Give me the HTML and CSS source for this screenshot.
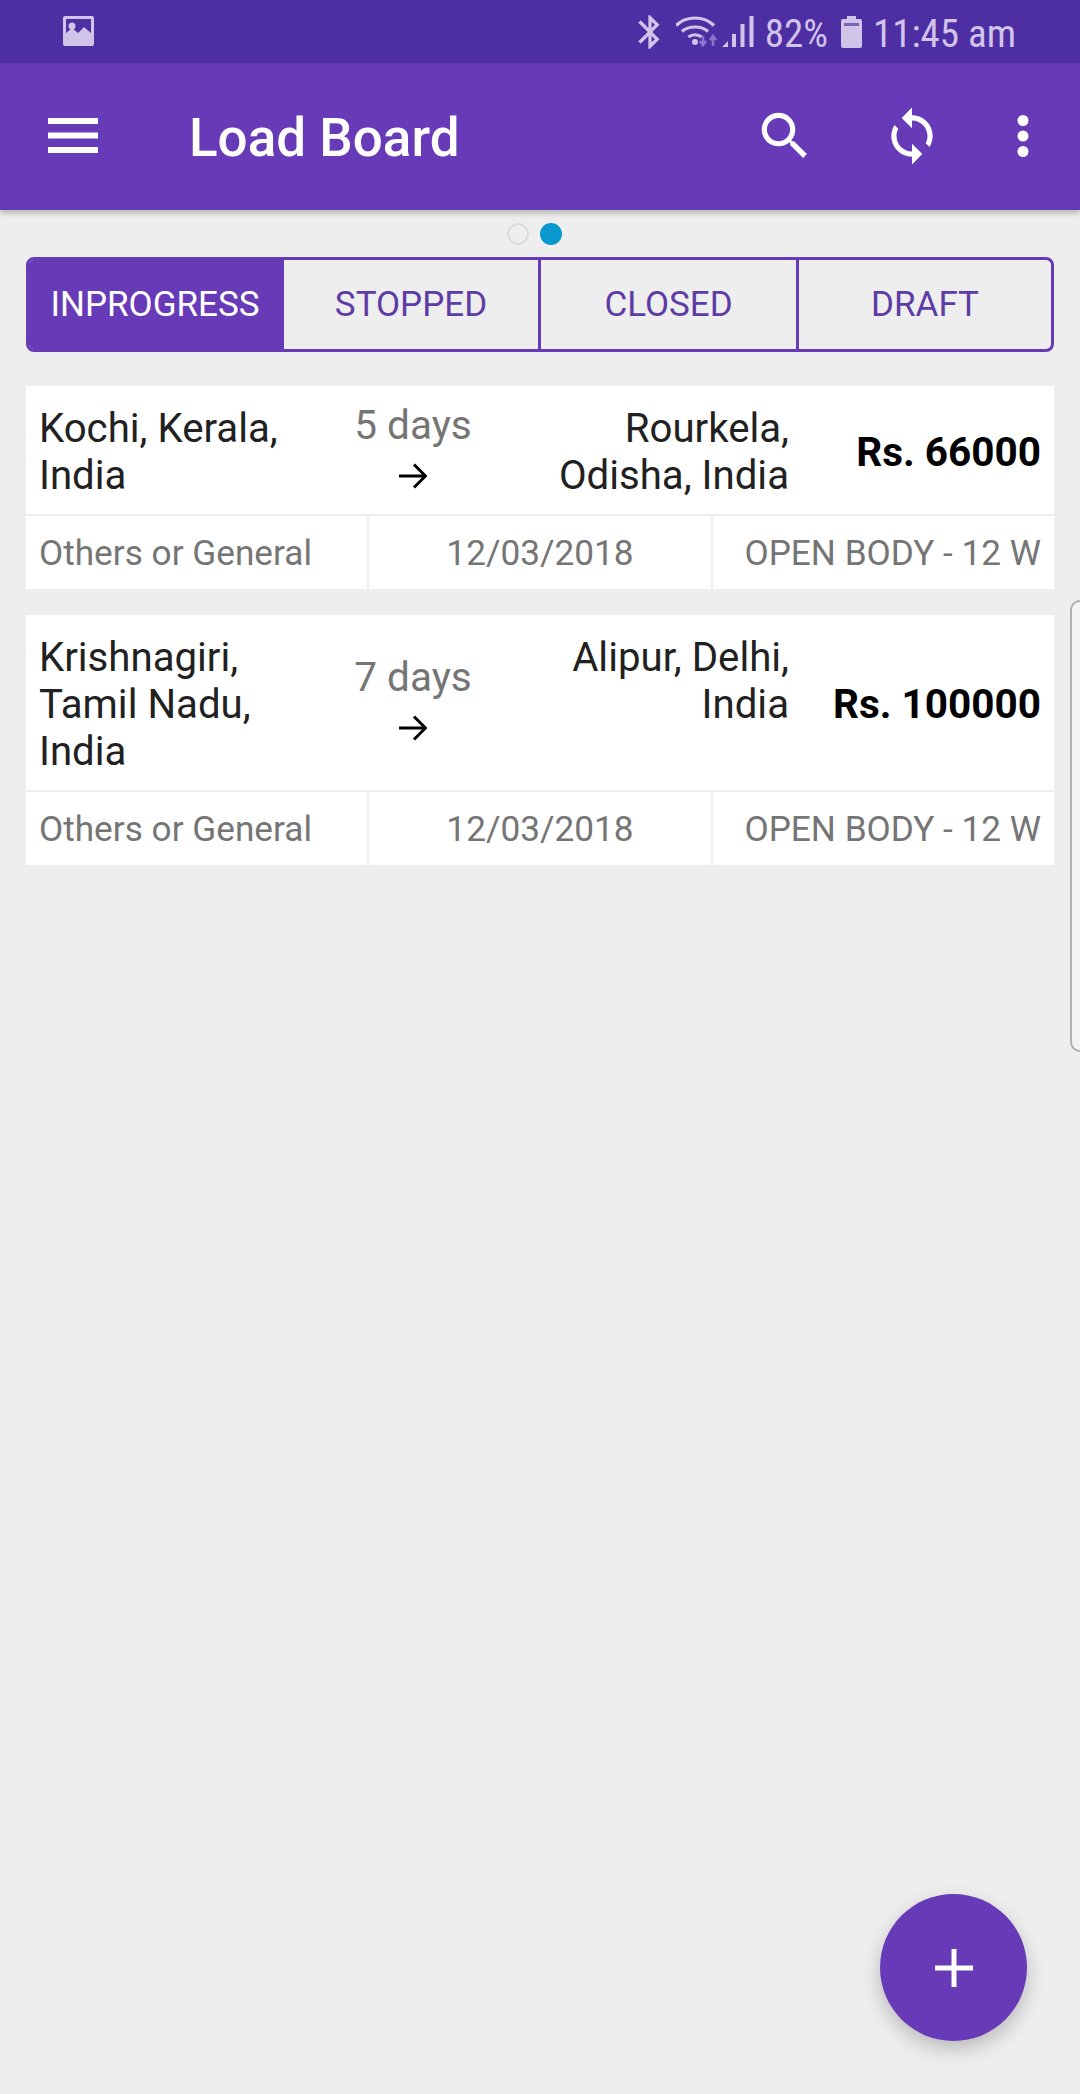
FILE: index.html
```html
<!DOCTYPE html>
<html lang="en">
<head>
    <meta charset="UTF-8">
    <meta name="viewport" content="width=device-width, initial-scale=1.0">
    <title>Load Board</title>
    <link rel="stylesheet" href="styles.css">
</head>
<body>
    <div class="status-bar">
        <svg class="status-image" viewBox="0 0 31 30">
            <path fill-rule="evenodd" fill="#d1c4e9" d="M2 0h27a2 2 0 0 1 2 2v26a2 2 0 0 1-2 2H2a2 2 0 0 1-2-2V2a2 2 0 0 1 2-2zM3 3v14l6-5 6 5 6-6 7 6V3z"/>
            <circle cx="9" cy="10" r="3.5" fill="#d1c4e9"/>
        </svg>
        <div class="status-right">
            <svg class="status-bt" viewBox="0 0 24 24"><path fill="#d1c4e9" d="M17.71 7.71L12 2h-1v7.59L6.41 5 5 6.41 10.59 12 5 17.59 6.41 19 11 14.41V22h1l5.71-5.71-4.3-4.29 4.3-4.29zM13 5.83l1.88 1.88L13 9.59V5.83zm1.88 10.46L13 18.17v-3.76l1.88 1.88z"/></svg>
            <svg class="status-wifi" viewBox="0 0 44 32">
                <g fill="none" stroke="#d1c4e9" stroke-width="3.2">
                    <path d="M0 9.5C10-.5 28-.5 38 9.5"/>
                    <path d="M6 15.500c6.500-6 19.500-6 26 0"/>
                    <path d="M12.500 21c3.500-3 9.500-3 13 0"/>
                </g>
                <circle cx="19" cy="26" r="3" fill="#d1c4e9"/>
                <path d="M27 20v9M24 25l3 4 3-4" fill="none" stroke="#8c74c8" stroke-width="2.600"/>
                <path d="M37 30v-10M34 24l3-4 3 4" fill="none" stroke="#8c74c8" stroke-width="2.600"/>
            </svg>
            <svg class="status-signal" viewBox="0 0 32 32">
                <path fill="#d1c4e9" d="M0 31l6-6v6zM10 18h4v13h-4zM18.500 8h4v23h-4zM27.500 0h4v31h-4z"/>
            </svg>
            <span class="status-text">82%</span>
            <svg class="status-battery" viewBox="0 0 21 32">
                <path fill="#d1c4e9" d="M6 0h9v3h4a2 2 0 0 1 2 2v25a2 2 0 0 1-2 2H2a2 2 0 0 1-2-2V5a2 2 0 0 1 2-2h4z"/>
                <rect x="3" y="7" width="15" height="3" fill="#7e63bd"/>
            </svg>
            <span class="status-text">11:45 am</span>
        </div>
    </div>

    <header class="app-bar">
        <svg class="menu-icon" viewBox="0 0 50 35"><path fill="#fff" d="M0 0h50v6H0zM0 14.500h50v6H0zM0 29h50v6H0z"/></svg>
        <h1 class="app-title">Load Board</h1>
        <svg class="bar-icon search-icon" viewBox="0 0 24 24"><path fill="#fff" d="M15.500 14h-.79l-.28-.27C15.410 12.590 16 11.110 16 9.500 16 5.910 13.090 3 9.500 3S3 5.910 3 9.500 5.910 16 9.500 16c1.610 0 3.090-.59 4.230-1.570l.27.28v.79l5 4.990L20.490 19l-4.990-5zm-6 0C7.010 14 5 11.990 5 9.500S7.010 5 9.500 5 14 7.010 14 9.500 11.990 14 9.500 14z"/></svg>
        <svg class="bar-icon sync-icon" viewBox="0 0 24 24"><path fill="#fff" d="M12 4V1L8 5l4 4V6c3.310 0 6 2.690 6 6 0 1.010-.25 1.970-.7 2.800l1.460 1.460C19.540 15.030 20 13.570 20 12c0-4.420-3.580-8-8-8zm0 14c-3.310 0-6-2.690-6-6 0-1.010.25-1.970.7-2.800L5.240 7.740C4.460 8.970 4 10.430 4 12c0 4.420 3.580 8 8 8v3l4-4-4-4v3z"/></svg>
        <svg class="bar-icon more-icon" viewBox="0 0 62 62"><g fill="#fff"><circle cx="31" cy="15.500" r="5.500"/><circle cx="31" cy="31" r="5.500"/><circle cx="31" cy="46.500" r="5.500"/></g></svg>
    </header>

    <div class="pager-dots">
        <span class="dot"></span>
        <span class="dot dot-active"></span>
    </div>

    <main class="content">
        <div class="tabs">
            <div class="tab tab-active">INPROGRESS</div>
            <div class="tab">STOPPED</div>
            <div class="tab">CLOSED</div>
            <div class="tab">DRAFT</div>
        </div>

        <div class="load-card">
            <div class="load-top">
                <div class="load-place">Kochi, Kerala, India</div>
                <div class="load-trip">
                    <span class="load-days">5 days</span>
                    <svg class="load-arrow" viewBox="0 0 28 26"><path fill="none" stroke="#000" stroke-width="3" d="M0 13h26M15 1.500L26.500 13 15 24.500"/></svg>
                </div>
                <div class="load-place load-dest">Rourkela, Odisha, India</div>
                <div class="load-price">Rs. 66000</div>
            </div>
            <div class="load-bottom">
                <div class="load-cell">Others or General</div>
                <div class="load-cell cell-center">12/03/2018</div>
                <div class="load-cell cell-right">OPEN BODY - 12 W</div>
            </div>
        </div>

        <div class="load-card">
            <div class="load-top">
                <div class="load-place">Krishnagiri, Tamil Nadu, India</div>
                <div class="load-trip">
                    <span class="load-days">7 days</span>
                    <svg class="load-arrow" viewBox="0 0 28 26"><path fill="none" stroke="#000" stroke-width="3" d="M0 13h26M15 1.500L26.500 13 15 24.500"/></svg>
                </div>
                <div class="load-place load-dest">Alipur, Delhi, India</div>
                <div class="load-price">Rs. 100000</div>
            </div>
            <div class="load-bottom">
                <div class="load-cell">Others or General</div>
                <div class="load-cell cell-center">12/03/2018</div>
                <div class="load-cell cell-right">OPEN BODY - 12 W</div>
            </div>
        </div>
    </main>

    <div class="edge-handle"></div>

    <div class="fab">
        <svg class="fab-icon" viewBox="0 0 38 38"><path fill="#fff" d="M16.500 0h5v16.500H38v5H21.500V38h-5V21.500H0v-5h16.500z"/></svg>
    </div>
</body>
</html>
```

FILE: styles.css
```css
* {
    box-sizing: border-box;
}
html, body {
    margin: 0;
    height: 2094px;
    overflow: hidden;
}
body {
    position: relative;
    font-family: Roboto, "Liberation Sans", sans-serif;
    background-color: #eeeeee;
    color: #212121;
}

/* barra de status */
.status-bar {
    height: 63px;
    background-color: #4e2ea3;
    display: flex;
    align-items: center;
    justify-content: space-between;
    padding: 0 64px 0 63px;
}
.status-image {
    width: 31px;
    height: 30px;
    margin-top: -1px;
}
.status-right {
    display: flex;
    align-items: center;
    color: #d1c4e9;
}
.status-bt {
    width: 40px;
    height: 40px;
    margin-right: 6px;
}
.status-wifi {
    width: 44px;
    height: 32px;
}
.status-signal {
    width: 32px;
    height: 32px;
    margin-left: 2px;
}
.status-battery {
    width: 21px;
    height: 32px;
    margin: 0 11px 0 13px;
}
.status-text {
    font-size: 39px;
    font-stretch: 85%;
    margin-left: 11px;
    line-height: 68px;
    height: 63px;
}
.status-battery + .status-text {
    margin-left: 0;
}

/* barra principal */
.app-bar {
    height: 147px;
    background-color: #673ab7;
    box-shadow: 0 3px 6px rgba(0, 0, 0, 0.25);
    display: flex;
    align-items: center;
    padding: 0 26px 0 48px;
    position: relative;
}
.menu-icon {
    width: 50px;
    height: 35px;
    margin-top: -2px;
}
.app-title {
    margin: 2px 0 0 91px;
    flex: 1;
    font-size: 53px;
    font-weight: 500;
    color: #fff;
}
.bar-icon {
    width: 62px;
    height: 62px;
    margin-top: -2px;
}
.search-icon {
    margin-right: 1px;
}
.sync-icon {
    margin-left: 64px;
    margin-right: 49px;
}

.pager-dots {
    display: flex;
    justify-content: center;
    gap: 11px;
    padding: 13px 11px 0 0;
    height: 47px;
}
.dot {
    width: 22px;
    height: 22px;
    border-radius: 50%;
    border: 2px solid #dcdcdc;
}
.dot-active {
    background-color: #0a99cf;
    border-color: #0a99cf;
}

.content {
    padding: 0 26px;
}

/* abas */
.tabs {
    display: grid;
    grid-template-columns: 255px 257px 258px 1fr;
    height: 95px;
    border: 3px solid #673ab7;
    border-radius: 8px;
    overflow: hidden;
    margin-bottom: 34px;
}
.tab {
    display: flex;
    align-items: center;
    justify-content: center;
    font-size: 35px;
    color: #5e3ca5;
    border-right: 3px solid #673ab7;
}
.tab:last-child {
    border-right: none;
}
.tab-active {
    background-color: #673ab7;
    color: #fff;
}

/* cartões */
.load-card {
    margin-bottom: 26px;
}
.load-top {
    display: grid;
    grid-template-columns: 265px 218px 267px 1fr;
    align-items: center;
    background-color: #fff;
    padding: 17px 13px;
    min-height: 128px;
}
.load-place {
    font-size: 40.2px;
    line-height: 47px;
    align-self: start;
    padding-top: 2px;
    margin-bottom: -2px;
}
.load-dest {
    text-align: right;
}
.load-trip {
    display: flex;
    flex-direction: column;
    align-items: center;
    gap: 18px;
    padding-bottom: 7px;
}
.load-days {
    font-size: 40.5px;
    line-height: 40px;
    color: #757575;
}
.load-arrow {
    width: 28px;
    height: 26px;
}
.load-price {
    font-size: 40.5px;
    font-weight: 700;
    text-align: right;
    color: #000;
    padding-top: 3px;
}
.load-bottom {
    display: grid;
    grid-template-columns: repeat(3, 1fr);
    gap: 2px;
    margin-top: 2px;
}
.load-cell {
    background-color: #fff;
    height: 73px;
    line-height: 75px;
    padding: 0 13px;
    font-size: 35.2px;
    color: #757575;
    white-space: nowrap;
}
.cell-center {
    text-align: center;
}
.cell-right {
    text-align: right;
}

.edge-handle {
    position: absolute;
    top: 600px;
    right: 0;
    width: 10px;
    height: 452px;
    background-color: #f4f4f4;
    border: 2px solid #b0b0b0;
    border-right: none;
    border-radius: 12px 0 0 12px;
}

.fab {
    position: absolute;
    left: 880px;
    top: 1894px;
    width: 147px;
    height: 147px;
    border-radius: 50%;
    background-color: #673ab7;
    box-shadow: 0 8px 20px rgba(0, 0, 0, 0.22);
    display: flex;
    align-items: center;
    justify-content: center;
}
.fab-icon {
    width: 38px;
    height: 38px;
}
```
